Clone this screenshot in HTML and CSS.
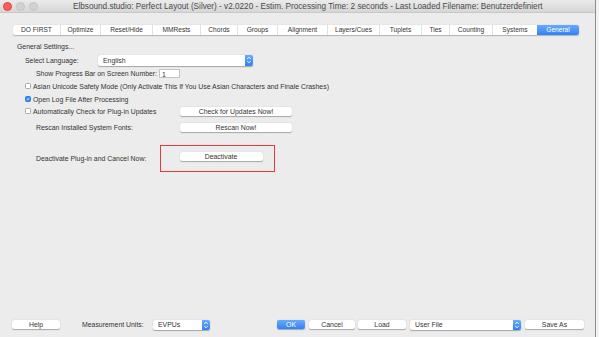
FILE: index.html
```html
<!DOCTYPE html>
<html>
<head>
<meta charset="utf-8">
<link rel="stylesheet" href="styles.css">
</head>
<body>
<div class="window">
  <div class="titlebar">
    <div class="lights"><span class="light red"></span><span class="light"></span><span class="light"></span></div>
    <div class="title">Elbsound.studio: Perfect Layout (Silver) - v2.0220 - Estim. Processing Time: 2 seconds - Last Loaded Filename: Benutzerdefiniert</div>
  </div>
  <div class="tabs">
    <div class="tab" style="width:47px">DO FIRST</div>
    <div class="tab" style="width:40px">Optimize</div>
    <div class="tab" style="width:52px">Reset/Hide</div>
    <div class="tab" style="width:48px">MMRests</div>
    <div class="tab" style="width:37px">Chords</div>
    <div class="tab" style="width:40px">Groups</div>
    <div class="tab" style="width:50px">Alignment</div>
    <div class="tab" style="width:52px">Layers/Cues</div>
    <div class="tab" style="width:42px">Tuplets</div>
    <div class="tab" style="width:28px">Ties</div>
    <div class="tab" style="width:43px">Counting</div>
    <div class="tab" style="width:45px">Systems</div>
    <div class="tab active" style="width:42px">General</div>
  </div>
  <div class="content">
    <div class="row r-gs"><span class="lbl">General Settings...</span></div>
    <div class="row r-lang">
      <span class="lbl w-lang">Select Language:</span>
      <div class="popup p-lang"><span>English</span><span class="stepper"><svg width="8" height="10" viewBox="0 0 8 10"><path d="M2.2 4 L4 2.2 L5.8 4 M2.2 6 L4 7.8 L5.8 6" fill="none" stroke="#fff" stroke-width="0.9"/></svg></span></div>
    </div>
    <div class="row r-prog">
      <span class="lbl">Show Progress Bar on Screen Number:</span>
      <div class="input">1</div>
    </div>
    <div class="row r-asian">
      <span class="cb"></span><span class="lbl">Asian Unicode Safety Mode (Only Activate This If You Use Asian Characters and Finale Crashes)</span>
    </div>
    <div class="row r-log">
      <span class="cb checked"><svg width="6" height="6" viewBox="0 0 6 6"><path d="M1.2 3.1 L2.5 4.4 L4.8 1.5" fill="none" stroke="#fff" stroke-width="1"/></svg></span><span class="lbl">Open Log File After Processing</span>
    </div>
    <div class="row r-auto">
      <span class="cb"></span><span class="lbl w-auto">Automatically Check for Plug-in Updates</span>
      <div class="btn b-wide">Check for Updates Now!</div>
    </div>
    <div class="row r-rescan">
      <span class="lbl w-rescan">Rescan Installed System Fonts:</span>
      <div class="btn b-wide">Rescan Now!</div>
    </div>
    <div class="row r-deact">
      <span class="lbl w-deact">Deactivate Plug-in and Cancel Now:</span>
      <div class="redbox"><div class="btn b-deact">Deactivate</div></div>
    </div>
  </div>
  <div class="footer">
    <div class="btn b-help">Help</div>
    <span class="lbl f-units">Measurement Units:</span>
    <div class="popup p-units"><span>EVPUs</span><span class="stepper"><svg width="8" height="10" viewBox="0 0 8 10"><path d="M2.2 4 L4 2.2 L5.8 4 M2.2 6 L4 7.8 L5.8 6" fill="none" stroke="#fff" stroke-width="0.9"/></svg></span></div>
    <div class="btn b-ok">OK</div>
    <div class="btn b-cancel">Cancel</div>
    <div class="btn b-load">Load</div>
    <div class="popup p-file"><span>User File</span><span class="stepper"><svg width="8" height="10" viewBox="0 0 8 10"><path d="M2.2 4 L4 2.2 L5.8 4 M2.2 6 L4 7.8 L5.8 6" fill="none" stroke="#fff" stroke-width="0.9"/></svg></span></div>
    <div class="btn b-save">Save As</div>
  </div>
</div>
</body>
</html>
```
FILE: styles.css
```css
html, body {
  margin: 0;
  padding: 0;
  background: #f2f2f2;
}
body {
  width: 599px;
  height: 337px;
  overflow: hidden;
  font-family: "Liberation Sans", Arial, sans-serif;
  font-size: 6.9px;
  color: #333;
}
.window {
  width: 595px;
  height: 337px;
  border-right: 1px solid #8e8e8e;
  background: #ececec;
  display: flex;
  flex-direction: column;
}
.titlebar {
  height: 13px;
  background: linear-gradient(#ebebeb, #d6d6d6);
  border-bottom: 1px solid #c8c8c8;
  box-sizing: border-box;
  display: flex;
  align-items: center;
  position: relative;
}
.lights {
  display: flex;
  gap: 4px;
  padding-left: 3px;
}
.light {
  width: 9px;
  height: 9px;
  border-radius: 50%;
  background: #d2d2d2;
  border: 0.5px solid #c4c4c4;
  box-sizing: border-box;
}
.light.red {
  background: #fc5f57;
  border-color: #e0443e;
}
.title {
  position: absolute;
  left: 73px;
  width: 452px;
  text-align: center;
  font-size: 8.2px;
  color: #4a4a4a;
  white-space: nowrap;
}
.tabs {
  display: flex;
  margin: 12px 0 0 13px;
  height: 10px;
  width: max-content;
  background: #fff;
  border-radius: 2px;
  box-shadow: 0 0.5px 1px rgba(0,0,0,0.25);
}
.tab {
  height: 10px;
  line-height: 10px;
  text-align: center;
  font-size: 6.6px;
  color: #333;
  border-left: 1px solid #e2e2e2;
  box-sizing: border-box;
  white-space: nowrap;
}
.tab:first-child { border-left: none; }
.tab.active {
  background: linear-gradient(#6aaaf9, #2f83f5);
  color: #fff;
  border-left: none;
  border-radius: 0 2px 2px 0;
}
.content {
  display: flex;
  flex-direction: column;
}
.row {
  display: flex;
  align-items: center;
  white-space: nowrap;
}
.lbl { white-space: nowrap; }
.r-gs { margin-top: 6px; height: 10px; padding-left: 17px; }
.r-lang { margin-top: 3px; height: 12px; padding-left: 25px; }
.w-lang { width: 73px; }
.r-prog { margin-top: 3px; height: 9px; padding-left: 36px; }
.r-asian { margin-top: 3px; height: 10px; padding-left: 25px; }
.r-log { margin-top: 3px; height: 10px; padding-left: 25px; }
.r-auto { margin-top: 2px; height: 10px; padding-left: 25px; }
.w-auto { width: 147px; }
.r-rescan { margin-top: 6px; height: 10px; padding-left: 36px; }
.w-rescan { width: 144px; }
.r-deact { margin-top: 13px; height: 27px; padding-left: 36px; }
.w-deact { width: 124px; }
.popup {
  background: #fff;
  border-radius: 2px;
  box-shadow: 0 0.5px 1px rgba(0,0,0,0.3);
  display: flex;
  align-items: center;
  justify-content: space-between;
  height: 11px;
  box-sizing: border-box;
  padding-left: 5px;
}
.p-lang { width: 155px; }
.stepper {
  width: 8px;
  height: 11px;
  background: linear-gradient(#6aaaf9, #2f83f5);
  border-radius: 0 2px 2px 0;
  display: flex;
  align-items: center;
  justify-content: center;
}
.input {
  margin-left: 2px;
  width: 21px;
  height: 9px;
  line-height: 9px;
  background: #fff;
  border: 0.5px solid #c4c4c4;
  box-sizing: border-box;
  padding-left: 2px;
}
.cb {
  width: 6px;
  height: 6px;
  background: #fff;
  border: 0.5px solid #a8a8a8;
  border-radius: 1.5px;
  box-sizing: border-box;
  margin-right: 2px;
  display: flex;
  align-items: center;
  justify-content: center;
}
.cb.checked {
  background: #3b8ff6;
  border-color: #2d7ae0;
}
.btn {
  background: #fff;
  border-radius: 2px;
  box-shadow: 0 0.5px 1px rgba(0,0,0,0.3);
  height: 9px;
  line-height: 9px;
  text-align: center;
  box-sizing: border-box;
  white-space: nowrap;
}
.b-wide { width: 112px; }
.redbox {
  width: 115px;
  height: 27px;
  border: 1.5px solid #e5393b;
  box-sizing: border-box;
  padding: 5.5px 0 0 18.5px;
  margin-left: 0;
}
.b-deact { width: 83px; }
.footer {
  margin-top: auto;
  margin-bottom: 8px;
  height: 9px;
  display: flex;
  align-items: center;
  padding-left: 12px;
}
.b-help { width: 48px; }
.f-units { margin-left: 22px; width: 71px; }
.p-units { width: 57px; height: 10px; }
.p-units .stepper, .p-file .stepper { height: 10px; }
.b-ok {
  margin-left: 67px;
  width: 28px;
  background: linear-gradient(#6aaaf9, #2f83f5);
  color: #fff;
}
.b-cancel { margin-left: 4px; width: 46px; }
.b-load { margin-left: 3px; width: 48px; }
.p-file { margin-left: 4px; width: 111px; height: 10px; }
.b-save { margin-left: 4px; width: 59px; }
```
